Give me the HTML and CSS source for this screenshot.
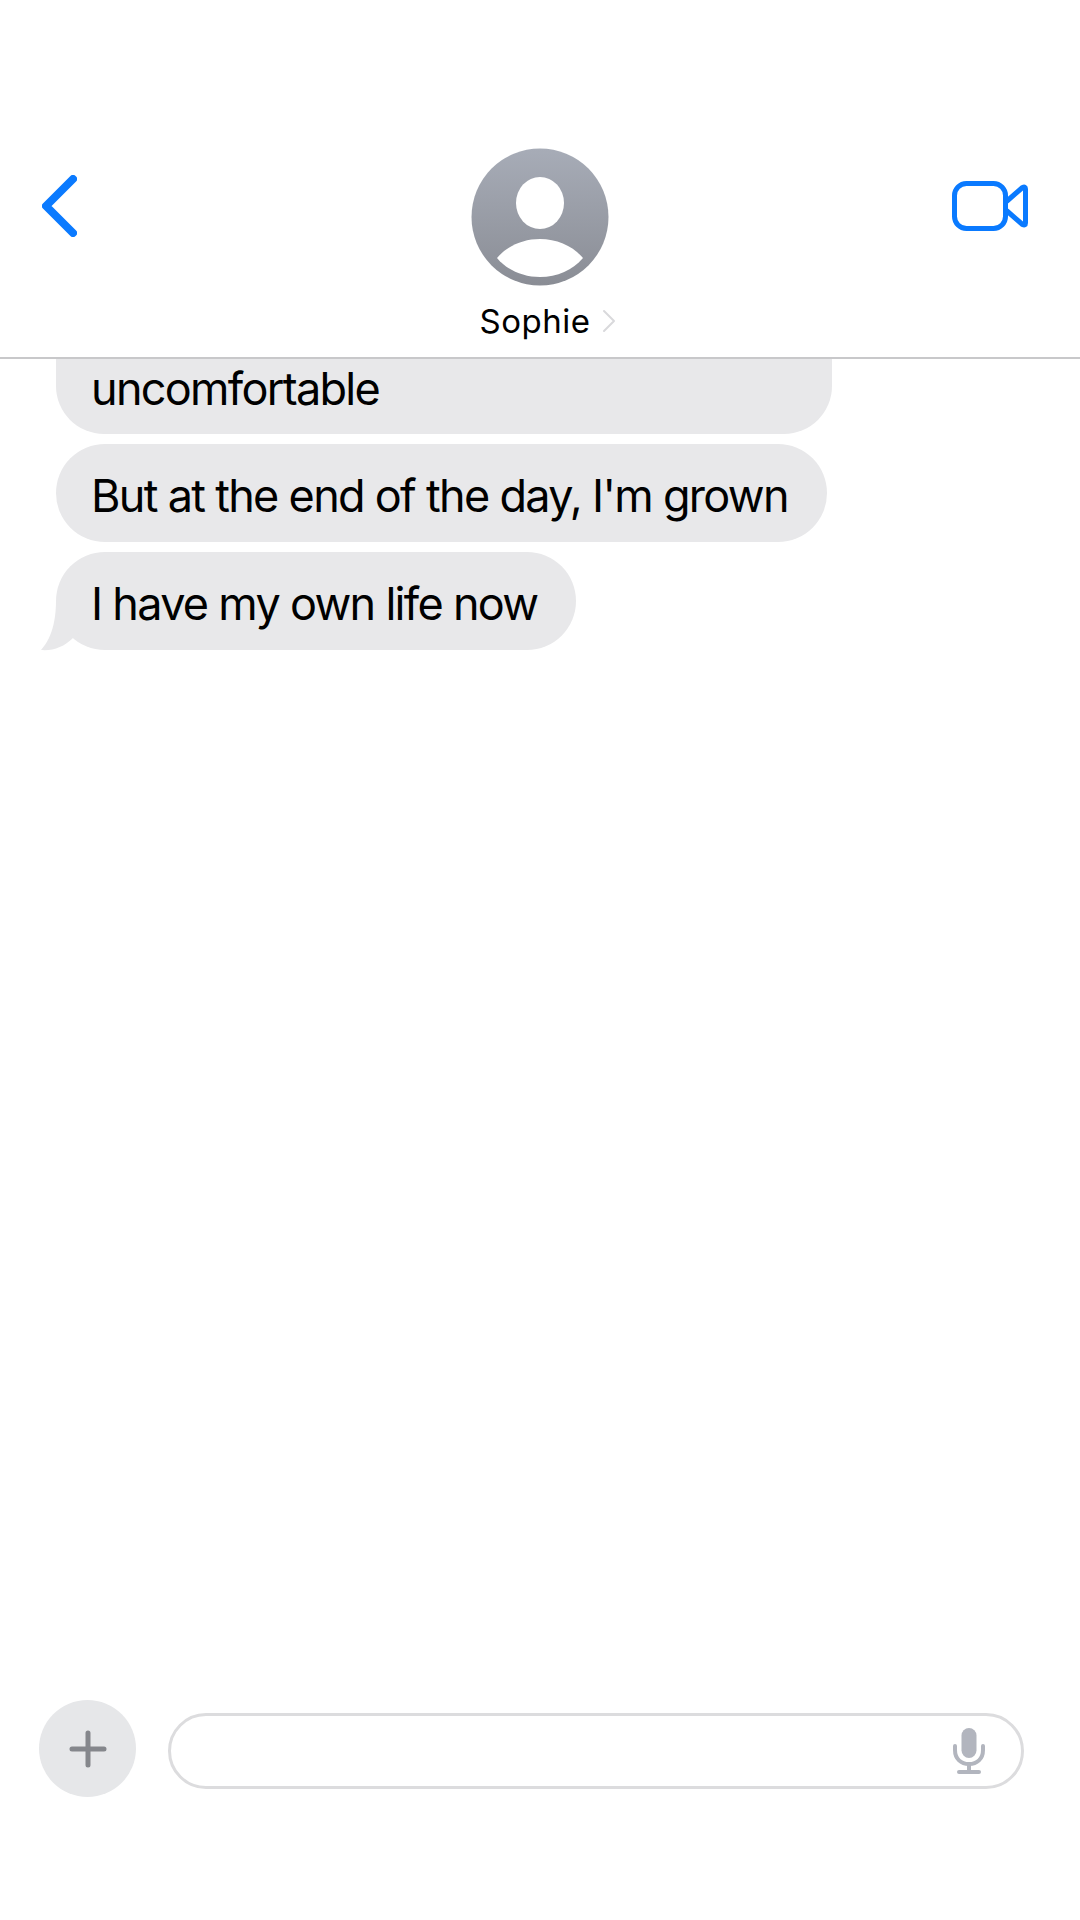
FILE: index.html
```html
<!DOCTYPE html>
<html lang="en">
<head>
<meta charset="utf-8">
<title>Sophie</title>
<link rel="stylesheet" href="styles.css">
</head>
<body>
<div class="screen">
  <header class="header">
    <svg class="back" width="35" height="62" viewBox="0 0 35 62"><path d="M31 4 L4 31 L31 58" fill="none" stroke="#0a7aff" stroke-width="8" stroke-linecap="round" stroke-linejoin="round"/></svg>
    <div class="contact">
      <svg class="avatar" width="138" height="138" viewBox="0 0 138 138">
        <defs>
          <linearGradient id="avatarFill" x1="0" y1="0" x2="0" y2="1">
            <stop offset="0" stop-color="#a7acb7"/>
            <stop offset="1" stop-color="#8a8d95"/>
          </linearGradient>
        </defs>
        <circle cx="69" cy="69" r="68.500" fill="url(#avatarFill)"/>
        <ellipse cx="69" cy="55" rx="24" ry="26" fill="#fff"/>
        <path d="M26 110 C36 98 52 91 69 91 C86 91 102 98 112 110 C102 122 86 129 69 129 C52 129 36 122 26 110 Z" fill="#fff"/>
      </svg>
      <div class="name-row">
        <span class="name">Sophie</span>
        <svg class="name-chevron" width="14" height="24" viewBox="0 0 14 24"><path d="M2 2 L12 12 L2 22" fill="none" stroke="#d9d9dc" stroke-width="2" stroke-linecap="round" stroke-linejoin="round"/></svg>
      </div>
    </div>
    <svg class="video" width="76" height="50" viewBox="0 0 76 50">
      <rect x="2.500" y="2.500" width="51" height="45" rx="12" fill="none" stroke="#0a7aff" stroke-width="5"/>
      <path d="M55 20 L70.500 6.500 Q73.500 5 73.500 8 L73.500 42 Q73.500 45 70.500 43.500 L55 30" fill="none" stroke="#0a7aff" stroke-width="5" stroke-linejoin="round" stroke-linecap="round"/>
    </svg>
  </header>

  <main class="thread">
    <div class="bubble bubble-clipped"><span class="bubble-text">uncomfortable</span></div>
    <div class="bubble"><span class="bubble-text">But at the end of the day, I'm grown</span></div>
    <div class="bubble bubble-tail"><span class="bubble-text">I have my own life now</span>
      <svg class="tail" width="44" height="51" viewBox="0 0 44 51"><path d="M15 0 C15 15 13 36 0 50 C12 51 23 47 32 38 L44 28 L44 0 Z" fill="#e8e8ea"/></svg>
    </div>
  </main>

  <footer class="composer">
    <div class="plus">
      <svg width="40" height="40" viewBox="0 0 40 40"><path d="M20 4 V36 M4 20 H36" stroke="#85878c" stroke-width="5" stroke-linecap="round"/></svg>
    </div>
    <div class="field">
      <svg class="mic" width="34" height="46" viewBox="0 0 34 46">
        <rect x="9.500" y="0" width="15" height="30" rx="7.500" fill="#b2b5be"/>
        <path d="M3 18 V22 C3 31 9 36 17 36 C25 36 31 31 31 22 V18" fill="none" stroke="#b2b5be" stroke-width="4" stroke-linecap="round"/>
        <path d="M17 36 V44 M7 44 H27" fill="none" stroke="#b2b5be" stroke-width="4" stroke-linecap="round"/>
      </svg>
    </div>
  </footer>
</div>
</body>
</html>
```

FILE: styles.css
```css
* { box-sizing: border-box; }

html, body {
  margin: 0;
  padding: 0;
  background: #fff;
}

.screen {
  width: 1080px;
  height: 1920px;
  display: flex;
  flex-direction: column;
  overflow: hidden;
  font-family: Inter, "Liberation Sans", sans-serif;
  color: #000;
}

.header {
  height: 359px;
  padding: 148px 52px 0;
  display: grid;
  grid-template-columns: 1fr auto 1fr;
  align-items: start;
  border-bottom: 2px solid #c8c8ca;
}

.back {
  margin-top: 27px;
  margin-left: -10px;
}

.video {
  justify-self: end;
  margin-top: 33px;
}

.contact {
  display: flex;
  flex-direction: column;
  align-items: center;
}

.avatar { display: block; }

.name-row {
  height: 48px;
  margin-top: 11px;
  margin-left: 16px;
  display: flex;
  align-items: center;
  gap: 12px;
}

.name {
  font-size: 33px;
  line-height: 48px;
  letter-spacing: 0.5px;
}

.name-chevron { display: block; }

.thread {
  flex: 1;
  padding: 0 0 0 56px;
  display: flex;
  flex-direction: column;
  align-items: flex-start;
  gap: 10px;
}

.bubble {
  position: relative;
  height: 98px;
  padding: 0 39px 0 35px;
  display: flex;
  align-items: center;
  background: #e8e8ea;
  border-radius: 49px;
  font-size: 45px;
  letter-spacing: -1.7px;
  white-space: nowrap;
}

.bubble-text {
  padding-top: 5px;
}

.bubble-clipped {
  width: 776px;
  height: 75px;
  padding-bottom: 22px;
  border-radius: 0 0 48px 48px;
}

.tail {
  position: absolute;
  left: -15px;
  bottom: -1px;
}

.composer {
  height: 220px;
  padding: 0 56px 0 39px;
  display: flex;
  align-items: flex-start;
  gap: 32px;
}

.plus {
  width: 97px;
  height: 97px;
  flex: none;
  border-radius: 50%;
  background: #e6e7e9;
  display: flex;
  align-items: center;
  justify-content: center;
}

.field {
  flex: 1;
  height: 76px;
  margin-top: 13px;
  padding-right: 35px;
  border: 3px solid #dcdcde;
  border-radius: 38px;
  display: flex;
  align-items: center;
  justify-content: flex-end;
}

.mic { display: block; }
```
